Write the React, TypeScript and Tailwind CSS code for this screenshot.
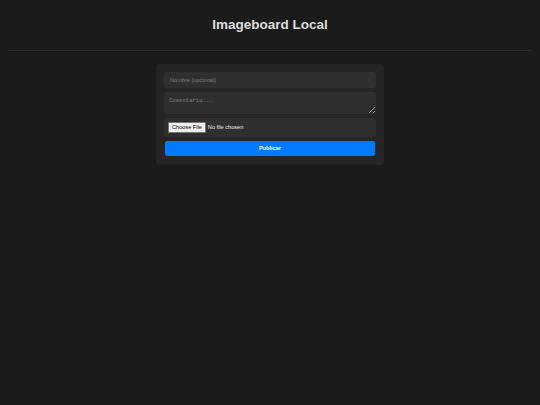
export default function App() {
  return (
    <div className="min-h-screen bg-[#1b1b1b] font-['Liberation_Sans',Arial,sans-serif] text-[#ddd]">
      {/* Header */}
      <header className="mx-[8px] h-[51px] border-b border-[#2c2c2c] flex items-center justify-center">
        <h1 className="text-[13.5px] font-bold text-[#dedede] leading-none">Imageboard Local</h1>
      </header>

      {/* Form */}
      <form
        className="mx-auto mt-[13px] w-[228px] bg-[#252525] rounded-[4px] px-[8px] pt-[8px] pb-[9px] flex flex-col gap-[4px]"
        onSubmit={(e) => e.preventDefault()}
      >
        <input
          type="text"
          placeholder="Nombre (opcional)"
          className="h-[16px] w-full rounded-[3px] bg-[#2f2f2f] px-[6px] text-[5.6px] text-[#ddd] placeholder:text-[#808080] outline-none"
        />
        <textarea
          placeholder="Comentario..."
          className="h-[22px] w-full rounded-[3px] bg-[#2f2f2f] px-[5px] pt-[5px] text-[5.6px] leading-[7px] font-['Liberation_Mono',monospace] text-[#ddd] placeholder:text-[#808080] outline-none"
        />
        <div className="h-[19px] rounded-[3px] bg-[#2f2f2f] px-[4px] flex items-center">
          <input
            type="file"
            className="text-[5.6px] text-[#eee] file:bg-[#efefef] file:text-black file:border file:border-[#767676] file:rounded-[1px] file:px-[3px] file:py-[1px] file:mr-[2px] file:leading-[6.5px]"
          />
        </div>
        <button
          type="submit"
          className="h-[15px] mx-[1px] rounded-[2px] bg-[#007bff] text-white text-[5.6px] font-bold"
        >
          Publicar
        </button>
      </form>
    </div>
  );
}
